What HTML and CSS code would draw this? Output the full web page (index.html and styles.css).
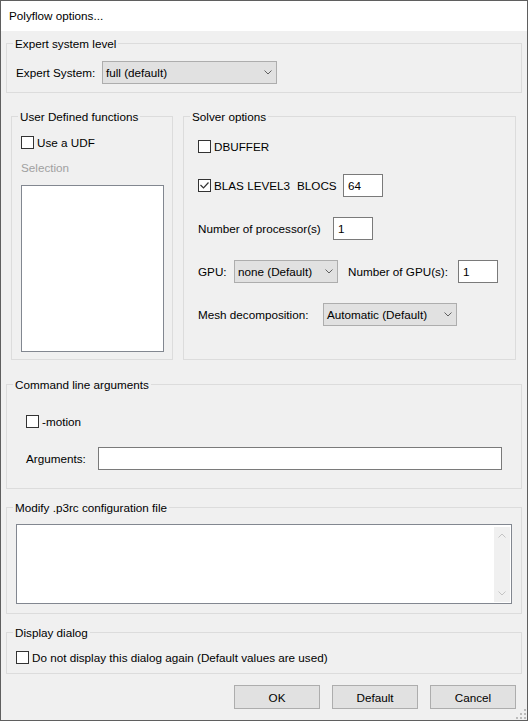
FILE: index.html
```html
<!DOCTYPE html>
<html lang="en">
<head>
    <meta charset="UTF-8">
    <meta name="viewport" content="width=device-width, initial-scale=1.0">
    <title>Polyflow options...</title>
    <link rel="stylesheet" href="styles.css">
</head>
<body>
<div class="dialog">
    <div class="titlebar">Polyflow options...</div>

    <div class="dialog-body">
        <fieldset class="group expert-group">
            <legend>Expert system level</legend>
            <div class="group-body">
                <div class="row">
                    <span class="expert-label">Expert System:</span>
                    <div class="combo expert-combo">
                        <span>full (default)</span>
                        <svg class="chevron" width="8" height="5" viewBox="0 0 8 5"><polyline points="0.5,0.5 4,4 7.5,0.5"/></svg>
                    </div>
                </div>
            </div>
        </fieldset>

        <div class="split">
            <fieldset class="group udf-group">
                <legend>User Defined functions</legend>
                <div class="group-body">
                    <label class="check-row"><span class="check"></span>Use a UDF</label>
                    <div class="disabled-label">Selection</div>
                    <div class="listbox"></div>
                </div>
            </fieldset>

            <fieldset class="group solver-group">
                <legend>Solver options</legend>
                <div class="group-body">
                    <label class="check-row"><span class="check"></span>DBUFFER</label>

                    <div class="row solver-row">
                        <label class="check-row blas"><span class="check"><svg width="11" height="11" viewBox="0 0 11 11"><polyline points="1.5,5 4.5,8 9.5,2.5"/></svg></span>BLAS LEVEL3</label>
                        <span class="blocs-label">BLOCS</span>
                        <input class="field small-field" type="text" value="64">
                    </div>

                    <div class="row solver-row">
                        <span class="proc-label">Number of processor(s)</span>
                        <input class="field small-field" type="text" value="1">
                    </div>

                    <div class="row solver-row">
                        <span class="gpu-label">GPU:</span>
                        <div class="combo gpu-combo">
                            <span>none (Default)</span>
                            <svg class="chevron" width="8" height="5" viewBox="0 0 8 5"><polyline points="0.5,0.5 4,4 7.5,0.5"/></svg>
                        </div>
                        <span class="gpu-count-label">Number of GPU(s):</span>
                        <input class="field small-field" type="text" value="1">
                    </div>

                    <div class="row solver-row">
                        <span class="mesh-label">Mesh decomposition:</span>
                        <div class="combo mesh-combo">
                            <span>Automatic (Default)</span>
                            <svg class="chevron" width="8" height="5" viewBox="0 0 8 5"><polyline points="0.5,0.5 4,4 7.5,0.5"/></svg>
                        </div>
                    </div>
                </div>
            </fieldset>
        </div>

        <fieldset class="group cmd-group">
            <legend>Command line arguments</legend>
            <div class="group-body">
                <label class="check-row"><span class="check"></span>-motion</label>
                <div class="row args-row">
                    <span class="args-label">Arguments:</span>
                    <input class="field args-field" type="text" value="">
                </div>
            </div>
        </fieldset>

        <fieldset class="group p3rc-group">
            <legend>Modify .p3rc configuration file</legend>
            <div class="group-body">
                <div class="memo">
                    <div class="scrollbar">
                        <svg class="arrow" width="8" height="5" viewBox="0 0 8 5"><polyline points="0.5,4.5 4,1 7.5,4.5"/></svg>
                        <svg class="arrow" width="8" height="5" viewBox="0 0 8 5"><polyline points="0.5,0.5 4,4 7.5,0.5"/></svg>
                    </div>
                </div>
            </div>
        </fieldset>

        <fieldset class="group display-group">
            <legend>Display dialog</legend>
            <div class="group-body">
                <label class="check-row"><span class="check"></span>Do not display this dialog again (Default values are used)</label>
            </div>
        </fieldset>

        <div class="buttons">
            <button class="button">OK</button>
            <button class="button">Default</button>
            <button class="button">Cancel</button>
        </div>
    </div>

    <svg class="grip" width="10" height="10" viewBox="0 0 10 10">
        <rect x="8" y="0" width="2" height="2"/>
        <rect x="8" y="4" width="2" height="2"/>
        <rect x="4" y="4" width="2" height="2"/>
        <rect x="8" y="8" width="2" height="2"/>
        <rect x="4" y="8" width="2" height="2"/>
        <rect x="0" y="8" width="2" height="2"/>
    </svg>
</div>
</body>
</html>
```

FILE: styles.css
```css
body {
    margin: 0;
    font-family: "Liberation Sans", Arial, sans-serif;
    font-size: 11.7px;
    color: #000;
}

.dialog {
    position: relative;
    width: 528px;
    height: 721px;
    box-sizing: border-box;
    border: 1px solid #5f5f5f;
    background-color: #f0f0f0;
}
.titlebar {
    height: 30px;
    line-height: 30px;
    padding-left: 8px;
    background-color: #fff;
}
.dialog-body {
    padding: 0 5px;
}

/* group boxes */
.group {
    box-sizing: border-box;
    margin: 0;
    padding: 0;
    min-width: 0;
    border: 1px solid #dcdcdc;
}
.group legend {
    margin-left: 6px;
    padding: 0 2px;
    line-height: 15px;
}

.expert-group {
    margin-top: 5px;
}
.expert-group .group-body {
    padding: 10px 9px 8px;
}

.split {
    display: flex;
    gap: 10px;
    margin: 16px 6px 0 5px;
}
.udf-group {
    width: 162px;
}
.udf-group .group-body {
    padding: 11px 8px 6px 9px;
}
.solver-group {
    flex: 1;
}
.solver-group .group-body {
    padding: 15px 10px 33px 14px;
}

.cmd-group {
    margin-top: 17px;
}
.cmd-group .group-body {
    padding: 22px 19px 18px;
}

.p3rc-group {
    margin-top: 11px;
}
.p3rc-group .group-body {
    padding: 9px;
}

.display-group {
    margin-top: 11px;
}
.display-group .group-body {
    padding: 10px 9px 8px;
}

/* rows and labels */
.row {
    display: flex;
    align-items: center;
    height: 23px;
}
.solver-row {
    margin-top: 20px;
}
.args-row {
    margin-top: 18px;
}
.expert-label { width: 86px; }
.blas { width: 99px; }
.blocs-label { width: 46px; }
.proc-label { width: 135px; }
.gpu-label { width: 36px; }
.gpu-count-label { width: 110px; margin-left: 10px; }
.mesh-label { width: 125px; }
.args-label { width: 72px; }

.check-row {
    display: flex;
    align-items: center;
    height: 15px;
}
.check {
    box-sizing: border-box;
    width: 13px;
    height: 13px;
    margin-right: 3px;
    border: 1px solid #333;
    background-color: #fff;
}
.check svg {
    display: block;
    fill: none;
    stroke: #333;
    stroke-width: 1.2;
}
.disabled-label {
    margin-top: 10px;
    line-height: 15px;
    color: #a0a0a0;
}

/* controls */
.combo {
    box-sizing: border-box;
    display: flex;
    align-items: center;
    justify-content: space-between;
    height: 23px;
    padding: 0 4px 0 3px;
    border: 1px solid #adadad;
    background-color: #e1e1e1;
}
.chevron {
    fill: none;
    stroke: #606060;
}
.expert-combo { width: 175px; }
.gpu-combo { width: 104px; }
.mesh-combo { width: 134px; }

.field {
    box-sizing: border-box;
    height: 23px;
    margin: 0;
    padding: 0 4px;
    border: 1px solid #7a7a7a;
    background-color: #fff;
    font: inherit;
    color: #000;
    outline: none;
}
.small-field { width: 40px; }
.args-field { flex: 1; min-width: 0; }

.listbox {
    box-sizing: border-box;
    height: 167px;
    margin-top: 10px;
    border: 1px solid #828790;
    background-color: #fff;
}

.memo {
    box-sizing: border-box;
    display: flex;
    justify-content: flex-end;
    height: 80px;
    padding: 2px 1px 1px 0;
    border: 1px solid #828790;
    background-color: #fff;
}
.scrollbar {
    display: flex;
    flex-direction: column;
    align-items: center;
    justify-content: space-between;
    width: 16px;
    padding: 6px 0;
    background-color: #f0f0f0;
}
.arrow {
    fill: none;
    stroke: #c4c4c4;
}

.buttons {
    display: flex;
    justify-content: flex-end;
    gap: 12px;
    margin: 11px 6px 0 0;
}
.button {
    box-sizing: border-box;
    width: 86px;
    height: 24px;
    padding: 0;
    border: 1px solid #adadad;
    background-color: #e1e1e1;
    font: inherit;
    color: #000;
}

.grip {
    position: absolute;
    right: 1px;
    bottom: 1px;
    fill: #bcbcbc;
}
```
